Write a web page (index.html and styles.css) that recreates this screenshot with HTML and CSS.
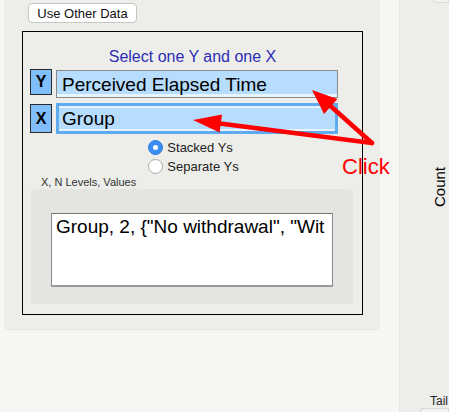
FILE: index.html
```html
<!DOCTYPE html>
<html>
<head>
<meta charset="utf-8">
<link rel="stylesheet" href="styles.css">
</head>
<body>
<div class="page">
  <div class="left">
    <div class="panel">
      <button class="btn">Use Other Data</button>
      <div class="box">
        <div class="title">Select one Y and one X</div>
        <div class="row row-y">
          <div class="role role-y">Y</div>
          <div class="field field-y">Perceived Elapsed Time</div>
        </div>
        <div class="row row-x">
          <div class="role role-x">X</div>
          <div class="field field-x">Group</div>
        </div>
        <div class="radios">
          <div class="radio-row"><span class="radio on"></span><span>Stacked Ys</span></div>
          <div class="radio-row"><span class="radio"></span><span>Separate Ys</span></div>
        </div>
        <div class="caption">X, N Levels, Values</div>
        <div class="well">
          <div class="textbox">Group, 2, {"No withdrawal", "Wit</div>
        </div>
      </div>
    </div>
  </div>
  <div class="right">
    <div class="tab-top"></div>
    <div class="count">Count</div>
    <div class="tail">Tail</div>
    <div class="tail-box"></div>
  </div>
</div>
<svg class="overlay" width="449" height="412" viewBox="0 0 449 412">
  <line x1="372" y1="143" x2="326" y2="102" stroke="#fe0000" stroke-width="4.5" stroke-linecap="round"/>
  <polygon points="312,90 337.4,99 324.1,114" fill="#fe0000"/>
  <line x1="372" y1="143" x2="216" y2="123" stroke="#fe0000" stroke-width="4.5" stroke-linecap="round"/>
  <polygon points="193,120 222,114.5 219.6,132.5" fill="#fe0000"/>
</svg>
<span class="click">Click</span>
</body>
</html>
```

FILE: styles.css
```css
* { box-sizing: border-box; }
html, body {
  margin: 0;
  padding: 0;
  width: 449px;
  height: 412px;
  overflow: hidden;
  background: #f6f6f2;
  font-family: "Liberation Sans", Arial, sans-serif;
  color: #000;
}
.page {
  display: flex;
  height: 412px;
}
.left {
  width: 399px;
  flex: none;
  padding-left: 4px;
}
.panel {
  width: 376px;
  height: 330px;
  background: #ededea;
  border-radius: 0 0 5px 5px;
  border-bottom: 1px solid #e6e6e2;
  padding: 3px 0 0 18px;
}
.btn {
  display: block;
  margin-left: 6px;
  width: 109px;
  height: 20px;
  padding: 0;
  background: #fff;
  border: 1px solid #c6c6c3;
  border-radius: 4px;
  font-family: "Liberation Sans", Arial, sans-serif;
  font-size: 13px;
  color: #111;
}
.box {
  margin-top: 8px;
  width: 341px;
  height: 284px;
  border: 1px solid #000;
  display: flex;
  flex-direction: column;
  padding-top: 16px;
}
.title {
  text-align: center;
  font-size: 16px;
  line-height: 18px;
  color: #2e2eb4;
}
.row {
  display: flex;
  align-items: flex-start;
  gap: 4px;
  padding-left: 7px;
}
.row-y { margin-top: 3px; height: 29px; }
.row-x { margin-top: 5px; height: 31px; }
.role {
  width: 22px;
  background: #80bdfb;
  border: 1.5px solid #2a2a2a;
  font-weight: bold;
  font-size: 16px;
  display: flex;
  align-items: center;
  justify-content: center;
}
.role-y { height: 26px; }
.role-x { height: 29px; margin-top: 1px; }
.field {
  width: 282px;
  font-size: 19px;
  line-height: 21px;
  display: flex;
  align-items: center;
  padding-left: 5px;
  background: #b6dcfe;
  white-space: nowrap;
  overflow: hidden;
}
.field-y {
  height: 28px;
  margin-top: 1px;
  border: 1px solid #8a8a8a;
  box-shadow: inset 0 -3px 0 #eaf4fd;
  padding-left: 5px;
}
.field-x {
  height: 31px;
  border: 3px solid #5eabf1;
  box-shadow: inset 0 2px 0 #e6f2fd, inset 0 -2px 0 #e6f2fd;
  padding-left: 3px;
}
.radios {
  align-self: center;
  margin-top: 4px;
  margin-left: 2px;
}
.radio-row {
  display: flex;
  align-items: center;
  gap: 4px;
  height: 19px;
  font-size: 13px;
  color: #222;
}
.radio {
  width: 15px;
  height: 15px;
  border-radius: 50%;
  background: #fff;
  border: 1px solid #a9a9a9;
  flex: none;
  display: flex;
  align-items: center;
  justify-content: center;
}
.radio.on {
  background: #3a8ef2;
  border-color: #2f7fe0;
}
.radio.on::after {
  content: "";
  width: 5px;
  height: 5px;
  border-radius: 50%;
  background: #fff;
}
.caption {
  font-size: 11px;
  line-height: 13px;
  padding-left: 18px;
  color: #333;
}
.well {
  margin-left: 8px;
  width: 322px;
  height: 115px;
  background: #e4e4e0;
  border-radius: 3px;
  padding: 24px 20px 0 20px;
}
.textbox {
  width: 282px;
  height: 74px;
  background: #fff;
  border: 1px solid #8c8c8c;
  border-top-color: #777;
  border-bottom: 2px solid #9a9a9a;
  padding: 2px 0 0 4px;
  font-size: 19px;
  line-height: 21px;
  white-space: nowrap;
  overflow: hidden;
}
.right {
  flex: 1;
  background: #ededea;
  border-left: 1px solid #e8e8e4;
  display: flex;
  flex-direction: column;
  overflow: hidden;
}
.tab-top {
  margin-left: 33px;
  height: 3px;
  flex: none;
  background: #f2f2ee;
  border: 1px solid #dcdcd8;
  border-top: none;
  border-radius: 0 0 0 3px;
}
.count {
  margin-top: 164px;
  margin-left: 32px;
  writing-mode: vertical-rl;
  transform: rotate(180deg);
  font-size: 15px;
  line-height: 15px;
  width: 15px;
}
.tail {
  margin-top: auto;
  margin-left: 30px;
  font-size: 12px;
  line-height: 14px;
  color: #222;
}
.tail-box {
  margin-left: 20px;
  height: 4px;
  flex: none;
  background: #f2f2ee;
  border: 1px solid #d8d8d4;
  border-bottom: none;
  border-radius: 4px 0 0 0;
}
.overlay {
  position: absolute;
  left: 0;
  top: 0;
  pointer-events: none;
}
.click {
  position: absolute;
  left: 342px;
  top: 154px;
  font-size: 22px;
  line-height: 26px;
  color: #fe0000;
}
```
